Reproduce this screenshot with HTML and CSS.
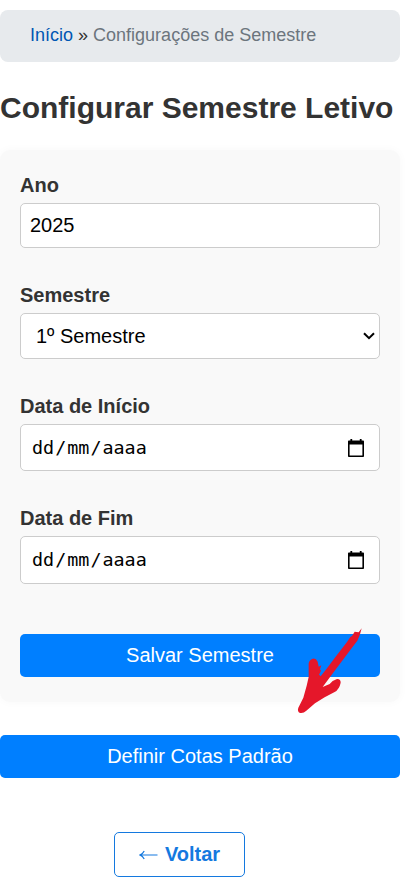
FILE: index.html
```html
<!DOCTYPE html>
<html lang="pt-BR">
<head>
<meta charset="utf-8">
<title>Configurar Semestre Letivo</title>
<link rel="stylesheet" href="styles.css">
</head>
<body>
<main class="page">
  <nav class="breadcrumb"><a href="#">Início</a> <span class="sep">»</span> <span>Configurações de Semestre</span></nav>
  <h1>Configurar Semestre Letivo</h1>
  <form class="card">
    <div class="field year">
      <label for="ano">Ano</label>
      <input class="control" id="ano" type="text" value="2025">
    </div>
    <div class="field term">
      <label>Semestre</label>
      <div class="control select"><span>1º Semestre</span>
        <svg class="chevron" width="12" height="8" viewBox="0 0 12 8"><path d="M1 1.2 6 6.2 11 1.2" fill="none" stroke="#000" stroke-width="2"/></svg>
      </div>
    </div>
    <div class="field start">
      <label>Data de Início</label>
      <div class="control date"><span class="mask"><span>dd</span><span>/</span><span>mm</span><span>/</span><span>aaaa</span></span>
        <svg width="16" height="18" viewBox="0 0 16 18"><path d="M0 2.4Q0 1.6.8 1.6H2.4V0H4.2V1.6H11.8V0H13.6V1.6H15.2Q16 1.6 16 2.4V17Q16 18 15.2 18H.8Q0 18 0 17ZM1.6 5.6V16.4H14.4V5.6Z" fill="#000" fill-rule="evenodd"/></svg>
      </div>
    </div>
    <div class="field end">
      <label>Data de Fim</label>
      <div class="control date"><span class="mask"><span>dd</span><span>/</span><span>mm</span><span>/</span><span>aaaa</span></span>
        <svg width="16" height="18" viewBox="0 0 16 18"><path d="M0 2.4Q0 1.6.8 1.6H2.4V0H4.2V1.6H11.8V0H13.6V1.6H15.2Q16 1.6 16 2.4V17Q16 18 15.2 18H.8Q0 18 0 17ZM1.6 5.6V16.4H14.4V5.6Z" fill="#000" fill-rule="evenodd"/></svg>
      </div>
    </div>
    <button class="primary" type="button">Salvar Semestre</button>
  </form>
  <button class="primary" type="button">Definir Cotas Padrão</button>
  <a class="back" href="#"><svg width="19" height="10" viewBox="0 0 19 10"><path d="M.8 5H18.5M5.2 1Q3.8 4 .8 5Q3.8 6 5.2 9" fill="none" stroke="#1479df" stroke-width="1.2"/></svg><span>Voltar</span></a>
  <svg class="arrow" width="76" height="96" viewBox="0 0 228 288"><path d="M209 19 200 31 188 29 180 42 175 45 165 60 128 108 105 139 86 163 81 158 87 146 84 142 88 130 80 134 77 119Q72 108 62 110 52 113 50 124L50 165 44 191 34 227 19 257Q15 269 24 273 34 275 43 266L69 244 98 226 128 210Q142 202 146 182 146 170 135 171L122 177 113 186 92 195 127 148 181 76 196 56 201 44 204 37Z" fill="#e5172a"/></svg>
</main>
</body>
</html>
```
FILE: styles.css
```css
* { box-sizing: border-box; }
body { margin: 0; background: #fff; color: #333; font: 20px/23px "Liberation Sans", Arial, sans-serif; overflow: hidden; }
.page { position: relative; width: 400px; padding-top: 10px; display: flex; flex-direction: column; }
.breadcrumb { height: 52px; padding: 0 30px; border-radius: 8px; background: #e7eaed; color: #6c757d; font-size: 18px; line-height: 50px; white-space: nowrap; }
.breadcrumb a { color: #0056b3; text-decoration: none; }
.sep { color: #333; }
h1 { margin: 27px 0 24px; font-size: 30px; line-height: 37px; white-space: nowrap; }
.card { height: 552px; padding: 24px 20px 25px; border-radius: 10px; background: #f9f9f9; box-shadow: 0 0 10px rgba(0, 0, 0, .03); }
.field { display: flex; flex-direction: column; }
label { font-weight: bold; margin-bottom: 6px; }
.control { width: 100%; border: 1px solid #ccc; border-radius: 5px; background: #fff; color: #000; font: inherit; }
.year { height: 110px; }
.term { height: 111px; }
.start { height: 112px; }
.end { height: 127px; }
.year .control { height: 45px; padding: 0 9px; }
.select, .date { display: flex; align-items: center; justify-content: space-between; }
.select { height: 46px; padding: 0 4px 0 15px; }
.date { height: 47px; padding: 0 15px 0 11px; }
.end .date { height: 48px; padding-bottom: 1px; }
.mask { display: flex; gap: 1px; font: 18.4px/23px "DejaVu Sans Mono", monospace; }
.primary { width: 100%; height: 43px; border: 0; border-radius: 5px; background: #007fff; color: #fff; font: inherit; flex: none; }
.card + .primary { margin-top: 33px; }
.back { width: 131px; height: 45px; margin: 54px 0 0 114px; display: flex; align-items: center; justify-content: center; gap: 7px; border: 1px solid #1479df; border-radius: 5px; color: #1479df; font-weight: bold; text-decoration: none; }
.arrow { position: absolute; left: 292px; top: 622px; }
```
